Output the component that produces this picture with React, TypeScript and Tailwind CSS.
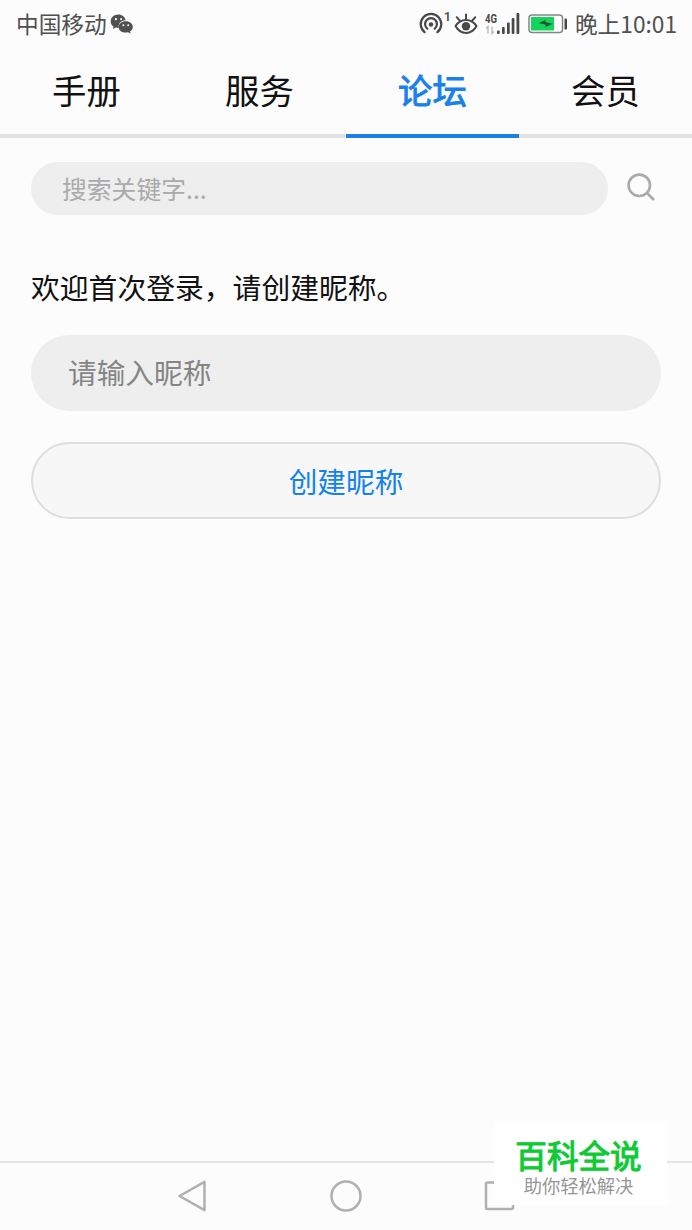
const tabs = [
  { name: "手册", active: false },
  { name: "服务", active: false },
  { name: "论坛", active: true },
  { name: "会员", active: false },
];

const WechatIcon = () => (
  <svg width="24" height="20" viewBox="0 0 24 20" fill="#505050">
    <path d="M8.500 0.500C4 .5.700 3.400.700 7.200c0 2.200 1 4 2.700 5.200L3 15l2.700-1.400c.9.300 1.800.4 2.800.4h.3C7.700 9.800 11 6.300 15.600 6.200 14.800 2.800 12 .5 8.500.5z" />
    <path d="M15.800 7.200c-4.200 0-7.200 2.500-7.200 5.700s3 5.700 7.200 5.700c.8 0 1.500-.1 2.200-.3l2.600 1.300-.5-2.300c1.700-1 2.700-2.600 2.700-4.400 0-3.200-2.900-5.700-7-5.700z" />
    <circle cx="5.900" cy="5.200" r="1.100" fill="#fcfcfc" />
    <circle cx="11.200" cy="5.200" r="1.100" fill="#fcfcfc" />
    <circle cx="13.400" cy="11.200" r="1" fill="#fcfcfc" />
    <circle cx="18.200" cy="11.200" r="1" fill="#fcfcfc" />
  </svg>
);

const HotspotIcon = () => (
  <svg width="24" height="24" viewBox="0 0 24 24" fill="none" stroke="#484848" strokeWidth="2.200" strokeLinecap="round">
    <path d="M5.600 20.200A10.300 10.300 0 1 1 18.400 20.200" />
    <path d="M8.300 16.700A5.900 5.900 0 1 1 15.700 16.700" />
    <circle cx="12" cy="12.500" r="2.200" fill="#484848" stroke="none" />
  </svg>
);

const EyeIcon = () => (
  <svg width="24" height="22" viewBox="0 0 24 22" fill="none" stroke="#484848" strokeWidth="2" strokeLinecap="round" strokeLinejoin="round">
    <path d="M1.500 13C4 9 7.800 6.900 12 6.900s8 2.100 10.500 6.100C20 17.500 16.200 20 12 20S4 17.500 1.500 13z" />
    <path d="M12 6V1.500M5.700 7.500L2.700 4.200M18.300 7.500l3-3.300" />
    <circle cx="12" cy="13.300" r="4.200" fill="#484848" stroke="none" />
  </svg>
);

const SignalIcon = () => (
  <svg className="overflow-visible" width="35" height="24" viewBox="0 0 35 24" fill="#484848">
    <text x="0" y="10.500" fontFamily="Roboto, sans-serif" fontSize="13.500" fontWeight="700" textLength="12" lengthAdjust="spacingAndGlyphs">
      4G
    </text>
    <path d="M3 21.500v-7l-2 2M7 14.500v7l2-2" fill="none" stroke="#bdbdbd" strokeWidth="1.500" />
    <rect x="12" y="18.500" width="2.700" height="3.500" rx="1" />
    <rect x="17" y="15" width="2.700" height="7" rx="1" />
    <rect x="22" y="10.500" width="2.700" height="11.500" rx="1" />
    <rect x="26.700" y="6" width="2.700" height="16" rx="1" />
    <rect x="31.500" y="1" width="2.800" height="21" rx="1" />
  </svg>
);

const BatteryIcon = () => (
  <svg width="40" height="20" viewBox="0 0 40 20">
    <rect x="1" y="1" width="33.500" height="17.500" rx="3" fill="#fff" stroke="#858585" strokeWidth="1.500" />
    <rect x="3" y="3" width="23" height="13.500" fill="#12d65c" />
    <path d="M10.500 9.300l7-3.500v2.500l7.500 1.500-7.500 3.200v-2.400z" fill="#155b2d" />
    <rect x="36.500" y="4.500" width="2.500" height="11" rx="1" fill="#484848" />
  </svg>
);

const StatusBar = () => (
  <div className="flex h-12 items-center justify-between pl-4 pr-[15px] text-[22.7px] text-[#505050]">
    <div className="flex items-center gap-[3px]">
      <span>中国移动</span>
      <WechatIcon />
    </div>
    <div className="flex items-center">
      <HotspotIcon />
      <span className="mb-3.5 w-[11px] pl-px font-[Roboto] text-[12px] font-bold leading-3">1</span>
      <EyeIcon />
      <div className="ml-[7px]">
        <SignalIcon />
      </div>
      <div className="ml-2 mr-[7px]">
        <BatteryIcon />
      </div>
      <span>晚上10:01</span>
    </div>
  </div>
);

const Tabs = () => (
  <nav className="grid h-[90px] grid-cols-4">
    {tabs.map((tab) => (
      <button
        key={tab.name}
        className={
          tab.active
            ? "border-b-4 border-[#1a80ea] pb-[3px] text-[34.4px] text-[#1a80ea] [-webkit-text-stroke:0.9px_#1a80ea]"
            : "border-b-4 border-[#e2e2e2] pb-[3px] text-[34.4px] text-[#111]"
        }
      >
        {tab.name}
      </button>
    ))}
  </nav>
);

const BottomNav = () => (
  <div className="relative h-[69px] border-t-2 border-[#e4e4e4]">
    <div className="flex h-full items-center justify-center gap-[122px] pb-0.5 text-[#b0b0b0]">
      <svg width="32" height="34" viewBox="0 0 32 34" fill="none" stroke="currentColor" strokeWidth="2.500" strokeLinejoin="round">
        <path d="M3.500 17L28.500 2.800v28.400z" />
      </svg>
      <svg width="32" height="34" viewBox="0 0 32 34" fill="none" stroke="currentColor" strokeWidth="2.500">
        <circle cx="16" cy="17" r="14.500" />
      </svg>
      <svg width="32" height="34" viewBox="0 0 32 34" fill="none" stroke="currentColor" strokeWidth="2.500">
        <rect x="2" y="3.500" width="27" height="26.500" rx="1.500" />
      </svg>
    </div>
    <div className="absolute bottom-[25px] right-[25px] flex h-[84px] w-[173px] flex-col items-center bg-white pr-1 pt-[17px] whitespace-nowrap">
      <span className="text-[31.6px] leading-[32px] text-[#0dca35] [-webkit-text-stroke:1.1px_#0dca35]">百科全说</span>
      <span className="mt-[5px] text-[18.3px] leading-[20px] text-[#969696]">助你轻松解决</span>
    </div>
  </div>
);

const App = () => {
  return (
    <div
      lang="zh-CN"
      className="flex h-[1230px] w-[692px] flex-col overflow-hidden bg-[#fcfcfc] font-['Noto_Sans_CJK_SC',sans-serif]"
    >
      <StatusBar />
      <Tabs />
      <main className="flex-1 px-[31px] pt-6">
        <div className="flex items-center">
          <input
            className="h-[53px] w-[577px] rounded-full bg-[#eeeeee] px-[31px] pb-px text-[24.8px] placeholder:text-[#aaaaaa]"
            placeholder="搜索关键字..."
          />
          <svg className="mb-1 ml-[18px]" width="30" height="30" viewBox="0 0 30 30" fill="none" stroke="#aaaaaa" strokeWidth="2.600">
            <circle cx="13.300" cy="13.300" r="10.700" />
            <path d="M21 21l7 7" />
          </svg>
        </div>
        <p className="mt-[50px] text-[28.8px] leading-[44px] text-[#111]">欢迎首次登录，请创建昵称。</p>
        <input
          className="mt-[26px] block h-[76px] w-[630px] rounded-full bg-[#eeeeee] px-[37px] pb-[3px] text-[28.7px] placeholder:text-[#858585]"
          placeholder="请输入昵称"
        />
        <button className="mt-[31px] h-[77px] w-[630px] rounded-full border-2 border-[#dedede] bg-[#f7f7f7] text-[28.7px] text-[#1482ee]">
          创建昵称
        </button>
      </main>
      <BottomNav />
    </div>
  );
};

export default App;
